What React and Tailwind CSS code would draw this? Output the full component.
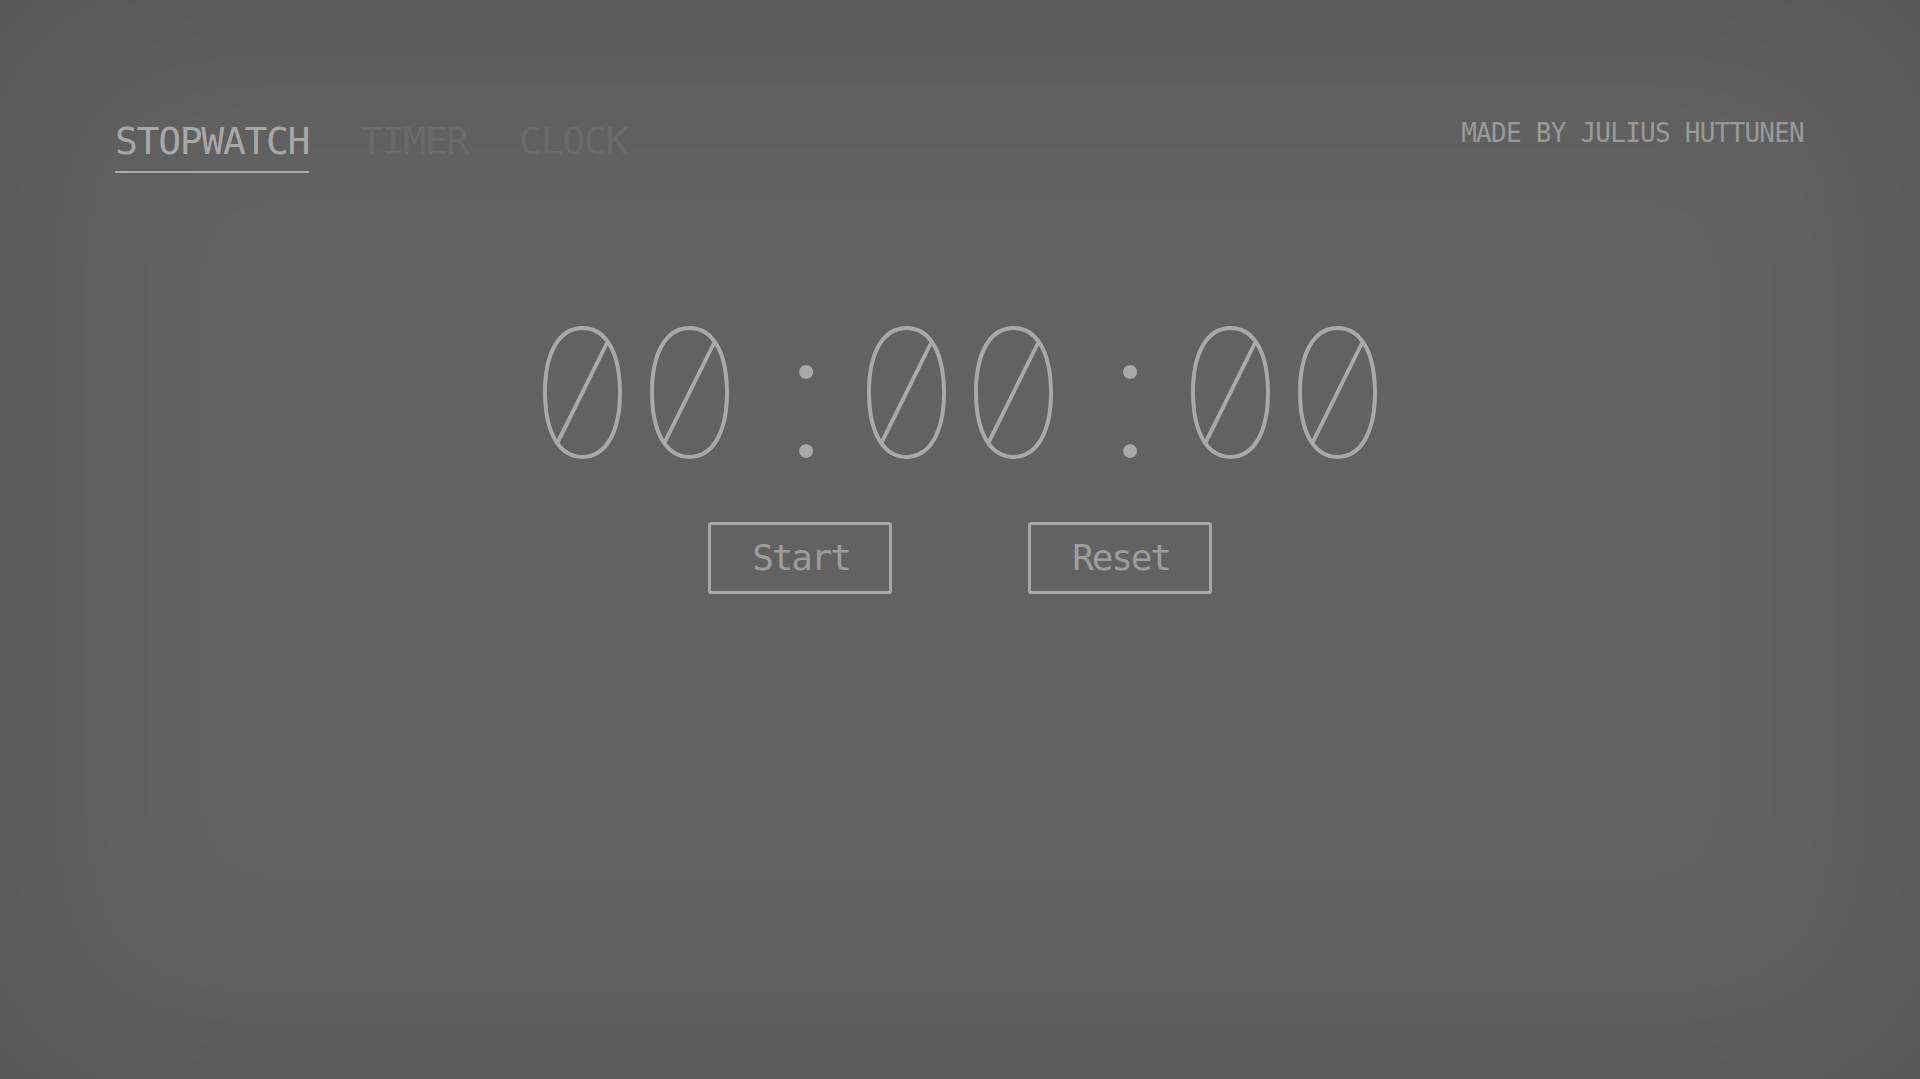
import React from "react";

const mono = "font-['DejaVu_Sans_Mono','Liberation_Mono',monospace]";

const Digit = ({ value }) => (
  <span className="flex w-[107px] justify-center">{value}</span>
);

const Colon = () => (
  <span className="w-[110px] pl-[16px] text-center font-extralight">:</span>
);

const Tab = ({ label, active }) => (
  <button
    className={
      active
        ? "border-b-2 border-[#aaaaaa] pb-[11px] text-[#a8a8a8]"
        : "border-b-2 border-transparent pb-[11px] text-[#6a6a6a]"
    }
  >
    {label}
  </button>
);

export default function App() {
  return (
    <div className={`h-[1079px] w-full overflow-hidden bg-[#626262] shadow-[inset_0_0_220px_rgba(0,0,0,0.14)] ${mono}`}>
      <header className="flex items-start justify-between pl-[115px] pr-[116px] pt-[120px]">
        <nav className="mt-[2px] flex gap-[51px] text-[38px] leading-none tracking-[-1.3px]">
          <Tab label="STOPWATCH" active />
          <Tab label="TIMER" />
          <Tab label="CLOCK" />
        </nav>
        <p className="text-[26px] leading-none tracking-[-0.75px] text-[#9a9a9a]">
          MADE BY JULIUS HUTTUNEN
        </p>
      </header>

      <main className="flex flex-col items-center">
        <div className="mt-[132px] flex font-['Inter',sans-serif] text-[177px] font-thin leading-none text-[#a9a9a9] [font-feature-settings:'zero','tnum']">
          <Digit value="0" />
          <Digit value="0" />
          <Colon />
          <Digit value="0" />
          <Digit value="0" />
          <Colon />
          <Digit value="0" />
          <Digit value="0" />
        </div>

        <div className="mt-[40px] flex gap-[136px] text-[36px] leading-none tracking-[-2.2px] text-[#9d9d9d]">
          <button className="flex h-[72px] w-[184px] items-center justify-center rounded-[3px] border-[3px] border-[#a9a9a9] pl-[2px]">
            Start
          </button>
          <button className="flex h-[72px] w-[184px] items-center justify-center rounded-[3px] border-[3px] border-[#a9a9a9] pl-[2px]">
            Reset
          </button>
        </div>
      </main>
    </div>
  );
}
